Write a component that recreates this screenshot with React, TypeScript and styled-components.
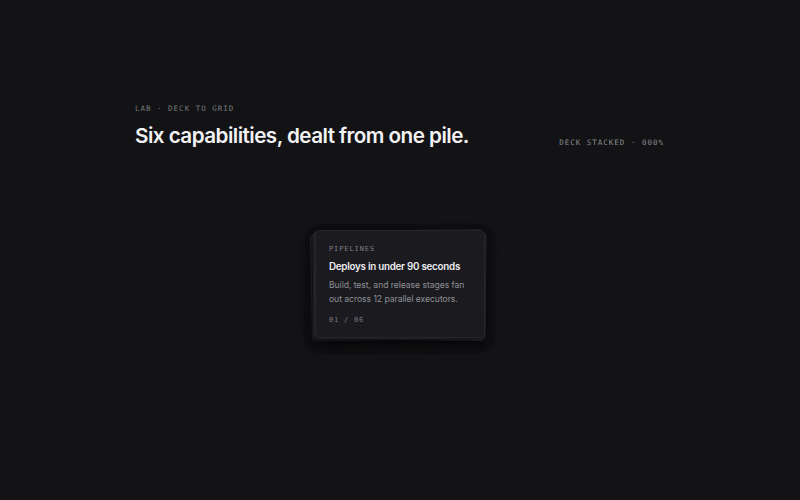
import React from "react";
import styled, { createGlobalStyle } from "styled-components";

const GlobalStyle = createGlobalStyle`
    html, body {
        margin: 0;
        padding: 0;
        background: #131316;
    }
    body {
        font-family: Inter, "Noto Sans", sans-serif;
        -webkit-font-smoothing: antialiased;
    }
`;

const Page = styled.div`
    width: 800px;
    height: 500px;
    display: flex;
    flex-direction: column;
    align-items: center;
    padding-top: 104px;
    box-sizing: border-box;
    overflow: hidden;
`;

const Inner = styled.div`
    width: 530px;
    display: flex;
    flex-direction: column;
`;

const Header = styled.div`
    display: flex;
    justify-content: space-between;
    align-items: flex-end;
`;

const TitleBlock = styled.div`
    display: flex;
    flex-direction: column;
    gap: 9px;
`;

const Mono = styled.span<{ $color?: string }>`
    font-family: "DejaVu Sans Mono", "Liberation Mono", monospace;
    font-size: 7.5px;
    letter-spacing: 1px;
    text-transform: uppercase;
    color: ${({ $color }) => $color || "#77777c"};
`;

const Title = styled.h1`
    margin: 0;
    font-size: 20.7px;
    font-weight: 600;
    letter-spacing: -0.55px;
    color: #f2f2f4;
    line-height: 28px;
`;

const Status = styled(Mono)`
    margin-bottom: 3px;
    margin-right: 1px;
`;

const Stage = styled.div`
    position: relative;
    height: 200px;
    margin-top: 25px;
`;

const Card = styled.div<{ $top: boolean }>`
    position: absolute;
    left: 50%;
    top: 50%;
    width: 170px;
    height: 108px;
    margin-left: -85px;
    margin-top: -45px;
    box-sizing: border-box;
    padding: 14px 13px 10px;
    border-radius: 5px;
    background: #1b1b1f;
    border: 1px solid ${({ $top }) => ($top ? "#25262a" : "#2a2b30")};
    box-shadow: 0 4px 12px rgba(0, 0, 0, 0.2);
    display: flex;
    flex-direction: column;
`;

const CardTag = styled(Mono)`
    color: #7f7f86;
    font-size: 7px;
    letter-spacing: 0.9px;
`;

const CardTitle = styled.div`
    margin-top: 8px;
    font-size: 9.8px;
    font-weight: 600;
    color: #ececef;
    letter-spacing: -0.25px;
    white-space: nowrap;
`;

const CardBody = styled.p`
    margin: 6px 0 0;
    font-size: 8.6px;
    line-height: 14px;
    color: #8e8f96;
    letter-spacing: -0.05px;
`;

const CardIndex = styled(Mono)`
    margin-top: 10px;
    font-size: 7px;
    letter-spacing: 0.8px;
    color: #76767e;
`;

const stack = [
    { x: -4, y: 2, r: -1.1 },
    { x: 1, y: 2, r: 0.8 },
    { x: -2, y: 1, r: -0.6 },
    { x: 1, y: 1, r: 0.5 },
    { x: -1, y: 0, r: -0.3 },
    { x: 0, y: 0, r: 0 },
];

const App: React.FC = () => {
    return (
        <>
            <GlobalStyle />
            <Page>
                <Inner>
                    <Header>
                        <TitleBlock>
                            <Mono>Lab · Deck to grid</Mono>
                            <Title>Six capabilities, dealt from one pile.</Title>
                        </TitleBlock>
                        <Status $color="#8a8a90">Deck stacked · 000%</Status>
                    </Header>
                    <Stage>
                        {stack.map((s, i) => (
                            <Card
                                key={i}
                                $top={i === stack.length - 1}
                                style={{ transform: `translate(${s.x}px, ${s.y}px) rotate(${s.r}deg)` }}>
                                {i === stack.length - 1 && (
                                    <>
                                        <CardTag>Pipelines</CardTag>
                                        <CardTitle>Deploys in under 90 seconds</CardTitle>
                                        <CardBody>
                                            Build, test, and release stages fan out across 12 parallel executors.
                                        </CardBody>
                                        <CardIndex>01 / 06</CardIndex>
                                    </>
                                )}
                            </Card>
                        ))}
                    </Stage>
                </Inner>
            </Page>
        </>
    );
};

export default App;
